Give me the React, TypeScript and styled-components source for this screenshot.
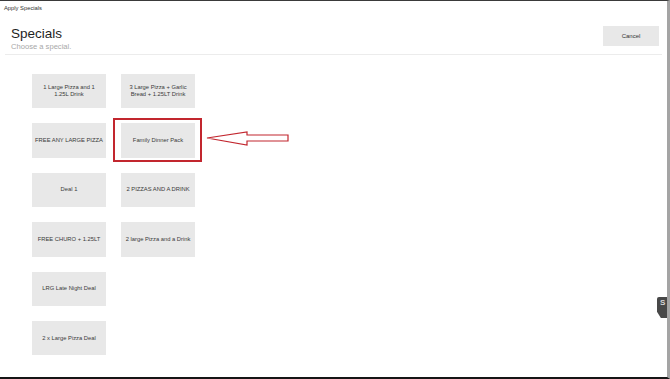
import React from "react"
import styled, { createGlobalStyle } from "styled-components"

const GlobalStyle = createGlobalStyle`
  html, body {
    margin: 0;
    padding: 0;
    background: #fff;
  }
  body {
    font-family: "Liberation Sans", Arial, sans-serif;
  }
`

const Window = styled.div`
  position: relative;
  width: 670px;
  height: 379px;
  box-sizing: border-box;
  border-top: 1px solid #3a3a3a;
  border-right: 3px solid #a4a4a4;
  border-bottom: 2px solid #151515;
  background: #fff;
  overflow: hidden;
`

const TitleBar = styled.div`
  height: 14px;
  line-height: 14px;
  padding-left: 4px;
  font-size: 5.8px;
  color: #333;
`

const Header = styled.div`
  display: flex;
  justify-content: space-between;
  align-items: flex-start;
  margin: 0 5px;
  padding: 11px 3px 0 6px;
  height: 40px;
  box-sizing: border-box;
  border-bottom: 1px solid #ececec;
`

const TitleBlock = styled.div`
  display: flex;
  flex-direction: column;
`

const Title = styled.div`
  font-size: 13.5px;
  line-height: 16px;
  color: #1e1e1e;
`

const SubTitle = styled.div`
  font-size: 7.6px;
  line-height: 9px;
  color: #a8a8a8;
`

const CancelButton = styled.button`
  width: 56px;
  height: 20px;
  border: none;
  background: #e8e8e8;
  font-family: "Liberation Sans", Arial, sans-serif;
  font-size: 6px;
  color: #333;
  padding: 0;
`

// specials run down the first column, then the second
const Grid = styled.div`
  display: grid;
  grid-template-rows: repeat(6, 34.4px);
  grid-auto-columns: 74px;
  grid-auto-flow: column;
  column-gap: 15px;
  row-gap: 15px;
  margin: 19px 0 0 32px;
`

const Tile = styled.div<{ $nowrap?: boolean; $marked?: boolean }>`
  position: relative;
  display: flex;
  align-items: center;
  justify-content: center;
  text-align: center;
  box-sizing: border-box;
  padding: 0 8px;
  background: #e8e8e8;
  font-size: 5.8px;
  line-height: 7px;
  color: #3a3a3a;
  white-space: ${p => (p.$nowrap ? "nowrap" : "normal")};
  overflow: ${p => (p.$marked ? "visible" : "hidden")};

  ${p =>
    p.$marked &&
    `
    &::after {
      content: "";
      position: absolute;
      top: -5px;
      bottom: -4px;
      left: -8px;
      right: -7px;
      border: 2px solid #c2262e;
    }
  `}
`

const Arrow = styled.svg`
  position: absolute;
  left: 85px;
  top: 7px;
  width: 84px;
  height: 18px;
  overflow: visible;
`

const SideTab = styled.div`
  position: absolute;
  right: -3px;
  top: 296px;
  width: 13px;
  height: 21px;
  background: #484848;
  clip-path: polygon(0 0, 100% 0, 100% 100%, 30% 100%, 0 70%);
  border-radius: 2px 0 0 0;
  color: #d8d8d8;
  font-size: 8px;
  font-weight: bold;
  line-height: 12px;
  padding-left: 3px;
  box-sizing: border-box;
  overflow: hidden;
`

const specials = [
  { name: "1 Large Pizza and 1 1.25L Drink" },
  { name: "FREE ANY LARGE PIZZA", nowrap: true },
  { name: "Deal 1" },
  { name: "FREE CHURO + 1.25LT", nowrap: true },
  { name: "LRG Late Night Deal", nowrap: true },
  { name: "2 x Large Pizza Deal", nowrap: true },
  { name: "3 Large Pizza + Garlic Bread + 1.25LT Drink" },
  { name: "Family Dinner Pack", marked: true },
  { name: "2 PIZZAS AND A DRINK", nowrap: true },
  { name: "2 large Pizza and a Drink", nowrap: true },
]

const App = () => {
  return (
    <Window>
      <GlobalStyle />
      <TitleBar>Apply Specials</TitleBar>
      <Header>
        <TitleBlock>
          <Title>Specials</Title>
          <SubTitle>Choose a special.</SubTitle>
        </TitleBlock>
        <CancelButton>Cancel</CancelButton>
      </Header>
      <Grid>
        {specials.map(s => (
          <Tile key={s.name} $nowrap={s.nowrap} $marked={s.marked}>
            {s.name}
            {s.marked && (
              <Arrow viewBox="0 0 84 18">
                <polygon
                  points="1,8 41,2 41,5 82,5 82,11 41,11 41,15"
                  fill="#fff"
                  stroke="#c2262e"
                  strokeWidth="1.2"
                />
              </Arrow>
            )}
          </Tile>
        ))}
      </Grid>
      <SideTab>S</SideTab>
    </Window>
  )
}

export default App
